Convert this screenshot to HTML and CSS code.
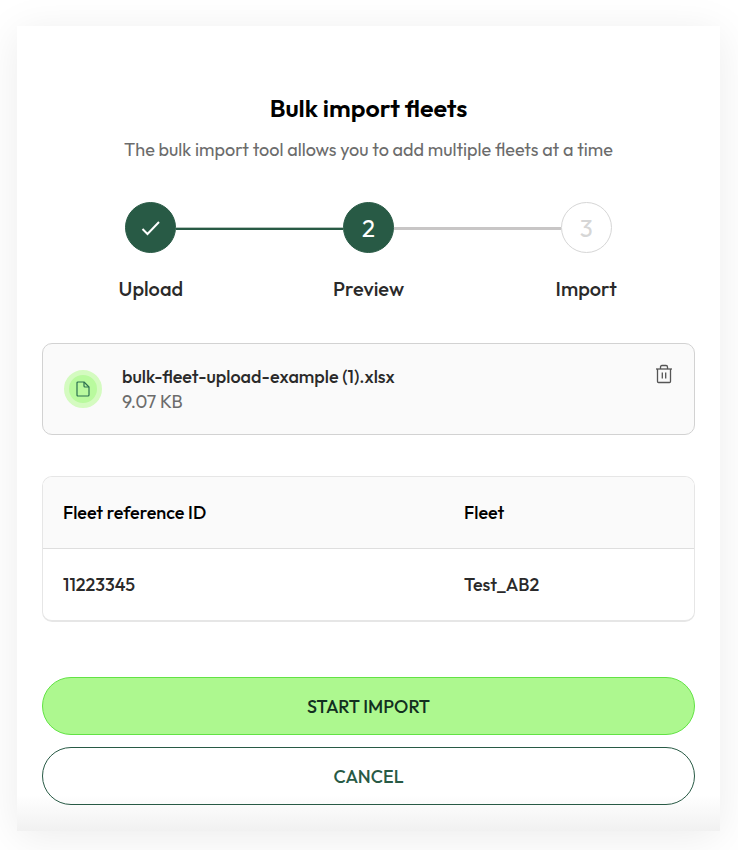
FILE: index.html
```html
<!DOCTYPE html>
<html lang="en">
  <head>
    <meta charset="UTF-8" />
    <meta name="viewport" content="width=device-width, initial-scale=1.0" />
    <title>Bulk import fleets</title>
    <link rel="stylesheet" href="styles.css">
  </head>
  <body>
    <main class="modal">
      <header class="modal-header">
        <h1>Bulk import fleets</h1>
        <p>The bulk import tool allows you to add multiple fleets at a time</p>
      </header>

      <ol class="steps">
        <li class="step done">
          <div class="step-track">
            <span class="line none"></span>
            <span class="circle">
              <svg width="20" height="18" viewBox="0 0 20 18" fill="none" stroke="currentColor" stroke-width="2">
                <path d="M1.5 10 L6.5 15 L18 3" />
              </svg>
            </span>
            <span class="line line-done"></span>
          </div>
          <span class="step-label">Upload</span>
        </li>
        <li class="step current" aria-current="step">
          <div class="step-track">
            <span class="line line-done"></span>
            <span class="circle">2</span>
            <span class="line"></span>
          </div>
          <span class="step-label">Preview</span>
        </li>
        <li class="step">
          <div class="step-track">
            <span class="line"></span>
            <span class="circle">3</span>
            <span class="line none"></span>
          </div>
          <span class="step-label">Import</span>
        </li>
      </ol>

      <section class="file">
        <span class="file-icon">
          <svg width="14" height="16" viewBox="0 0 14 16" fill="none" stroke="currentColor" stroke-width="1.2" stroke-linejoin="round">
            <path d="M2 1 H8 L13 6 V14 Q13 15 12 15 H2 Q1 15 1 14 V2 Q1 1 2 1 Z" />
            <path d="M8 1 V5 Q8 6 9 6 H13" />
          </svg>
        </span>
        <div class="file-info">
          <span class="file-name">bulk-fleet-upload-example (1).xlsx</span>
          <span class="file-size">9.07 KB</span>
        </div>
        <button type="button" class="delete" aria-label="Remove file">
          <svg width="18" height="20" viewBox="0 0 18 20" fill="none" stroke="currentColor" stroke-width="1.3" stroke-linejoin="round">
            <path d="M1 5 H17" />
            <path d="M5.5 5 V3 Q5.5 1.5 7 1.5 H11 Q12.5 1.5 12.5 3 V5" />
            <path d="M2.5 5 V17.5 Q2.5 18.5 3.5 18.5 H14.5 Q15.5 18.5 15.5 17.5 V5" />
            <path d="M7.3 8.5 V14.5 M10.7 8.5 V14.5" />
          </svg>
        </button>
      </section>

      <div class="table-wrap">
        <table>
          <thead>
            <tr>
              <th scope="col">Fleet reference ID</th>
              <th scope="col">Fleet</th>
            </tr>
          </thead>
          <tbody>
            <tr>
              <td>11223345</td>
              <td>Test_AB2</td>
            </tr>
          </tbody>
        </table>
      </div>

      <div class="actions">
        <button type="button" class="btn btn-primary">START IMPORT</button>
        <button type="button" class="btn btn-outline">CANCEL</button>
      </div>
    </main>
  </body>
</html>
```
FILE: styles.css
```css
* {
  box-sizing: border-box;
}

body {
  margin: 0;
  padding: 26px 18px 19px 17px;
  font-family: Outfit, Lato, sans-serif;
  font-size: 18px;
  line-height: 24px;
  color: #2a2a2a;
  background: #fff;
  overflow-x: hidden;
}

.modal {
  padding: 62px 25px 26px;
  background: linear-gradient(to top, #f1f1f1, #fff 36px);
  box-shadow: 0 6px 40px rgba(0, 0, 0, 0.08);
}

/* Header */
.modal-header {
  text-align: center;
}

h1 {
  margin: 0;
  font-size: 25px;
  font-weight: 600;
  line-height: 40px;
  color: #000;
}

.modal-header p {
  margin: 10px 0 0;
  color: #6c6c6c;
}

/* Steps */
.steps {
  display: flex;
  margin: 40px 0 0;
  padding: 0;
  list-style: none;
}

.step {
  flex: 1;
  text-align: center;
}

.step-track {
  display: flex;
  align-items: center;
}

.line {
  flex: 1;
  height: 3px;
  margin-top: 2px;
  background: #c8c6c6;
}

.line-done {
  background: linear-gradient(#b4c3bb 1px, #285a45 1px);
}

.line.none {
  background: none;
}

.circle {
  display: flex;
  align-items: center;
  justify-content: center;
  width: 51px;
  height: 51px;
  border: 1px solid #d6d6d6;
  border-radius: 50%;
  font-size: 24px;
  color: #d6d6d6;
}

.done .circle,
.current .circle {
  border-color: #285a45;
  background: #285a45;
  color: #fff;
}

.step-label {
  display: block;
  margin-top: 22px;
  font-size: 20px;
  font-weight: 500;
  line-height: 28px;
}

/* Uploaded file */
.file {
  display: flex;
  align-items: center;
  margin-top: 40px;
  padding: 20px 21px;
  border: 1px solid #d2d2d2;
  border-radius: 10px;
  background: #fafafa;
}

.file-icon {
  display: flex;
  align-items: center;
  justify-content: center;
  width: 38px;
  height: 38px;
  border: 5px solid #d4fbc0;
  border-radius: 50%;
  background: #b9fa9e;
  color: #2b7050;
}

.file-info {
  flex: 1;
  margin-left: 20px;
}

.file-name,
.file-size {
  display: block;
  line-height: 25px;
}

.file-name {
  font-weight: 500;
}

.file-size {
  color: #6c6c6c;
}

.delete {
  display: flex;
  align-self: flex-start;
  padding: 0;
  border: none;
  background: none;
  color: #555;
  cursor: pointer;
}

/* Preview table */
.table-wrap {
  margin-top: 41px;
  border: 1px solid #e6e6e6;
  border-bottom-width: 2px;
  border-radius: 10px;
  overflow: hidden;
}

table {
  width: 100%;
  border-collapse: separate;
  border-spacing: 0;
  table-layout: fixed;
}

th,
td {
  height: 72px;
  padding: 0 20px;
  text-align: left;
  font-weight: 500;
}

td {
  height: 71px;
}

th {
  border-bottom: 1px solid #dedede;
  background: #fafafa;
  color: #000;
}

th:first-child {
  width: 61.6%;
}

/* Buttons */
.actions {
  display: flex;
  flex-direction: column;
  gap: 12px;
  margin-top: 55px;
}

.btn {
  width: 100%;
  height: 58px;
  border-radius: 29px;
  font-family: inherit;
  font-size: 18px;
  font-weight: 500;
  cursor: pointer;
}

.btn-primary {
  border: 1px solid #62e344;
  background: #adf88f;
  color: #12301f;
}

.btn-outline {
  border: 1px solid #285a45;
  background: none;
  color: #285a45;
}
```
